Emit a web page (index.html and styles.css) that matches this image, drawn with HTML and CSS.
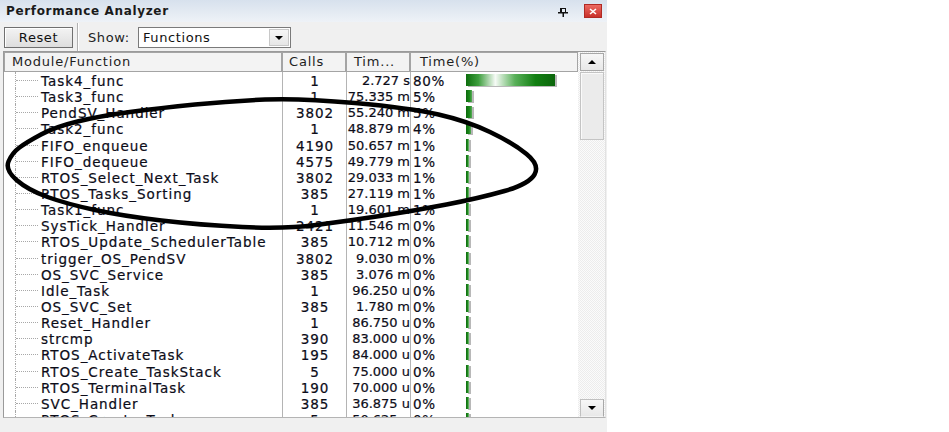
FILE: index.html
```html
<!DOCTYPE html>
<html>
<head>
<meta charset="utf-8">
<title>Performance Analyzer</title>
<link rel="stylesheet" href="styles.css">
</head>
<body>
<div class="panel">
  <div class="titlebar">
    <span class="title">Performance Analyzer</span>
    <svg class="pin" width="10" height="9" viewBox="0 0 10 9"><rect x="2.5" y="0.5" width="5" height="4" fill="none" stroke="#111"/><rect x="2" y="0" width="2" height="5" fill="#111"/><rect x="0" y="4" width="10" height="1.5" fill="#111"/><rect x="4.5" y="5" width="1.5" height="4" fill="#111"/></svg>
    <span class="close"><svg width="8" height="7" viewBox="0 0 8 7"><path d="M1 1 L7 6 M7 1 L1 6" stroke="#fff" stroke-width="1.6"/></svg></span>
  </div>
  <div class="toolbar">
    <button class="btn">Reset</button>
    <span class="sep"></span>
    <span class="lbl">Show:</span>
    <div class="select"><span class="sel-text">Functions</span><span class="ddbtn"><span class="tri-down"></span></span></div>
  </div>
  <div class="list">
    <div class="main">
      <div class="header">
        <div class="hcell">Module/Function</div>
        <div class="hcell hc2">Calls</div>
        <div class="hcell hc3">Tim...</div>
        <div class="hcell hc4">Time(%)</div>
      </div>
      <div class="rows">
        <div class="row"><div class="c-name">Task4_func</div><div class="c-calls">1</div><div class="c-time">2.727 s</div><div class="c-pct"><span class="pct">80%</span><span class="bar big"></span></div></div>
        <div class="row"><div class="c-name">Task3_func</div><div class="c-calls">1</div><div class="c-time">75.335 m</div><div class="c-pct"><span class="pct">5%</span><span class="bar b5"></span></div></div>
        <div class="row"><div class="c-name">PendSV_Handler</div><div class="c-calls">3802</div><div class="c-time">55.240 m</div><div class="c-pct"><span class="pct">5%</span><span class="bar b5"></span></div></div>
        <div class="row"><div class="c-name">Task2_func</div><div class="c-calls">1</div><div class="c-time">48.879 m</div><div class="c-pct"><span class="pct">4%</span><span class="bar b4"></span></div></div>
        <div class="row"><div class="c-name">FIFO_enqueue</div><div class="c-calls">4190</div><div class="c-time">50.657 m</div><div class="c-pct"><span class="pct">1%</span><span class="bar b1"></span></div></div>
        <div class="row"><div class="c-name">FIFO_dequeue</div><div class="c-calls">4575</div><div class="c-time">49.779 m</div><div class="c-pct"><span class="pct">1%</span><span class="bar b1"></span></div></div>
        <div class="row"><div class="c-name">RTOS_Select_Next_Task</div><div class="c-calls">3802</div><div class="c-time">29.033 m</div><div class="c-pct"><span class="pct">1%</span><span class="bar b1"></span></div></div>
        <div class="row"><div class="c-name">RTOS_Tasks_Sorting</div><div class="c-calls">385</div><div class="c-time">27.119 m</div><div class="c-pct"><span class="pct">1%</span><span class="bar b1"></span></div></div>
        <div class="row"><div class="c-name">Task1_func</div><div class="c-calls">1</div><div class="c-time">19.601 m</div><div class="c-pct"><span class="pct">1%</span><span class="bar b1"></span></div></div>
        <div class="row"><div class="c-name">SysTick_Handler</div><div class="c-calls">2421</div><div class="c-time">11.546 m</div><div class="c-pct"><span class="pct">0%</span><span class="bar b0"></span></div></div>
        <div class="row"><div class="c-name">RTOS_Update_SchedulerTable</div><div class="c-calls">385</div><div class="c-time">10.712 m</div><div class="c-pct"><span class="pct">0%</span><span class="bar b0"></span></div></div>
        <div class="row"><div class="c-name">trigger_OS_PendSV</div><div class="c-calls">3802</div><div class="c-time">9.030 m</div><div class="c-pct"><span class="pct">0%</span><span class="bar b0"></span></div></div>
        <div class="row"><div class="c-name">OS_SVC_Service</div><div class="c-calls">385</div><div class="c-time">3.076 m</div><div class="c-pct"><span class="pct">0%</span><span class="bar b0"></span></div></div>
        <div class="row"><div class="c-name">Idle_Task</div><div class="c-calls">1</div><div class="c-time">96.250 u</div><div class="c-pct"><span class="pct">0%</span><span class="bar b0"></span></div></div>
        <div class="row"><div class="c-name">OS_SVC_Set</div><div class="c-calls">385</div><div class="c-time">1.780 m</div><div class="c-pct"><span class="pct">0%</span><span class="bar b0"></span></div></div>
        <div class="row"><div class="c-name">Reset_Handler</div><div class="c-calls">1</div><div class="c-time">86.750 u</div><div class="c-pct"><span class="pct">0%</span><span class="bar b0"></span></div></div>
        <div class="row"><div class="c-name">strcmp</div><div class="c-calls">390</div><div class="c-time">83.000 u</div><div class="c-pct"><span class="pct">0%</span><span class="bar b0"></span></div></div>
        <div class="row"><div class="c-name">RTOS_ActivateTask</div><div class="c-calls">195</div><div class="c-time">84.000 u</div><div class="c-pct"><span class="pct">0%</span><span class="bar b0"></span></div></div>
        <div class="row"><div class="c-name">RTOS_Create_TaskStack</div><div class="c-calls">5</div><div class="c-time">75.000 u</div><div class="c-pct"><span class="pct">0%</span><span class="bar b0"></span></div></div>
        <div class="row"><div class="c-name">RTOS_TerminalTask</div><div class="c-calls">190</div><div class="c-time">70.000 u</div><div class="c-pct"><span class="pct">0%</span><span class="bar b0"></span></div></div>
        <div class="row"><div class="c-name">SVC_Handler</div><div class="c-calls">385</div><div class="c-time">36.875 u</div><div class="c-pct"><span class="pct">0%</span><span class="bar b0"></span></div></div>
        <div class="row"><div class="c-name">RTOS_Create_Task</div><div class="c-calls">5</div><div class="c-time">50.625 u</div><div class="c-pct"><span class="pct">0%</span><span class="bar b0"></span></div></div>
      </div>
    </div>
    <div class="vscroll">
      <div class="sbtn"><span class="tri-up"></span></div>
      <div class="thumb"></div>
      <div class="track"></div>
      <div class="sbtn sdown"><span class="tri-down"></span></div>
    </div>
  </div>
  <div class="bottom"></div>
</div>
<svg class="annotation" width="949" height="432" viewBox="0 0 949 432">
  <path d="M 355 103 Q 410 108 438.5 114.5 Q 467 121 490 132 Q 513 143 526.5 154 Q 540 165 534.5 174.5 Q 529 184 504.5 191 Q 480 198 446.5 204.5 Q 413 211 380 216 Q 347 221 316 225 Q 285 229 242.5 227 Q 200 225 161.5 220.5 Q 123 216 95 210 Q 67 204 47.5 197 Q 28 190 16.5 180 Q 5 170 8.5 161.5 Q 12 153 19.5 147.5 Q 27 142 41 134.5 Q 55 127 77.5 121.5 Q 100 116 130 112 Q 160 108 195 104.5 Q 230 101 265 99.5 Q 300 98 355 103 Z" fill="none" stroke="#000" stroke-width="4.5" stroke-linejoin="round"/>
</svg>
</body>
</html>
```
FILE: styles.css
```css
* { box-sizing: border-box; }
html, body { margin: 0; padding: 0; background: #fff; }
body {
  font-family: "DejaVu Sans", sans-serif;
  font-size: 13px;
  color: #161616;
  width: 949px;
  height: 432px;
  overflow: hidden;
  position: relative;
}
.panel {
  width: 607px;
  height: 432px;
  background: #f0f0f0;
  display: flex;
  flex-direction: column;
}
.titlebar {
  height: 22px;
  flex: none;
  background: linear-gradient(#d7e1ed, #eef2f7);
  display: flex;
  align-items: center;
  padding: 0 5px 0 6px;
}
.title {
  flex: 1;
  font-weight: bold;
  font-size: 12px;
  letter-spacing: 0.65px;
  color: #1a1a1a;
}
.pin { margin-right: 16px; margin-top: 2px; }
.close {
  width: 18px;
  height: 14px;
  background: linear-gradient(#ec6a62, #c8302a);
  border: 1px solid #b02a24;
  display: flex;
  align-items: center;
  justify-content: center;
}
.toolbar {
  height: 29px;
  flex: none;
  display: flex;
  align-items: flex-start;
  padding: 5px 0 0 4px;
  letter-spacing: 0.6px;
}
.btn {
  width: 69px;
  height: 21px;
  padding: 0;
  border: 1px solid #707070;
  background: linear-gradient(#f3f3f3, #dedede);
  box-shadow: inset 1px 1px #fff;
  font-family: "DejaVu Sans", sans-serif;
  font-size: 13px;
  letter-spacing: 0.6px;
  color: #111;
}
.sep {
  width: 2px;
  height: 28px;
  margin: -4px 0 0 4px;
  border-left: 1px solid #b0b0b0;
  border-right: 1px solid #fff;
}
.lbl {
  width: 50px;
  margin-left: 9px;
  line-height: 21px;
  color: #222;
}
.select {
  width: 153px;
  height: 21px;
  background: #fff;
  border: 1px solid #7a7a7a;
  display: flex;
  align-items: center;
  padding: 0 1px 0 4px;
}
.sel-text { flex: 1; color: #111; }
.ddbtn {
  width: 20px;
  height: 17px;
  background: linear-gradient(#f6f6f6, #e6e6e6);
  border: 1px solid #c8c8c8;
  display: flex;
  align-items: center;
  justify-content: center;
}
.tri-down {
  width: 0; height: 0;
  border-left: 4px solid transparent;
  border-right: 4px solid transparent;
  border-top: 4px solid #000;
}
.tri-up {
  width: 0; height: 0;
  border-left: 4px solid transparent;
  border-right: 4px solid transparent;
  border-bottom: 4px solid #000;
}
.list {
  height: 367px;
  flex: none;
  margin-left: 3px;
  width: 603px;
  border-left: 1px solid #9a9a9a;
  border-top: 1px solid #9a9a9a;
  border-bottom: 1px solid #b4b4b4;
  border-right: 1px solid #e2e2e2;
  display: flex;
  background: #fff;
}
.main {
  width: 574px;
  display: flex;
  flex-direction: column;
  overflow: hidden;
  font-size: 13.5px;
  letter-spacing: 0.95px;
  color: #0c0c18;
  -webkit-text-stroke: 0.2px #0c0c18;
}
.header {
  display: grid;
  grid-template-columns: 278px 64px 64px 168px;
  height: 20px;
  flex: none;
}
.hcell {
  border: 1px solid #a4a4a4;
  background: #f3f3f3;
  padding-left: 7px;
  line-height: 17px;
  color: #1e1e1e;
  white-space: nowrap;
  overflow: hidden;
  -webkit-text-stroke: 0;
  letter-spacing: 0.8px;
  font-size: 13px;
}
.hc2 { padding-left: 6px; }
.hc3 { padding-left: 7px; }
.hc4 { padding-left: 9px; }
.rows {
  flex: 1;
  overflow: hidden;
  background: #fff;
}
.row {
  display: grid;
  grid-template-columns: 278px 64px 64px 168px;
  height: 16.15px;
  line-height: 18px;
  white-space: nowrap;
}
.c-name {
  position: relative;
  padding-left: 37px;
  overflow: hidden;
}
.c-name::before {
  content: "";
  position: absolute;
  left: 11px;
  top: 0;
  bottom: 0;
  border-left: 1px dotted #a8a8a8;
}
.c-name::after {
  content: "";
  position: absolute;
  left: 12px;
  width: 22px;
  top: 8px;
  border-top: 1px dotted #a8a8a8;
}
.c-calls {
  border-left: 1px solid #b4b4b4;
  text-align: center;
  padding-left: 1px;
}
.c-time {
  border-left: 1px solid #b4b4b4;
  text-align: right;
  padding-right: 0;
  font-size: 13px;
  letter-spacing: 0;
}
.c-pct {
  border-left: 1px solid #b4b4b4;
  display: flex;
  align-items: flex-start;
  padding-left: 2px;
  letter-spacing: 0.6px;
}
.pct { width: 53px; flex: none; }
.bar {
  margin-top: 2px;
  height: 12px;
  background: linear-gradient(90deg, #0d6e0d 0%, #3e9e3e 14%, #f6fbf6 33%, #59b059 55%, #127f12 78%, #0b650b 100%);
  box-shadow: 2px 1px 0 #b8b8b8;
}
.big { width: 89px; }
.b5 { width: 6px; background: linear-gradient(90deg, #0c6a0c, #1d8a1d 60%, #5aac5a); }
.b4 { width: 5px; background: linear-gradient(90deg, #0c6a0c, #1d8a1d 60%, #5aac5a); }
.b1, .b0 { width: 3px; background: linear-gradient(90deg, #0c6a0c, #228c22 60%, #8acb8a); }
.vscroll {
  width: 27px;
  display: flex;
  flex-direction: column;
  padding: 1px 1px 0 2px;
  background-color: #f4f4f4;
  background-image: repeating-conic-gradient(#fbfbfb 0 25%, #ececec 0 50%);
  background-size: 2px 2px;
}
.sbtn {
  height: 18px;
  flex: none;
  border: 1px solid #a8a8a8;
  background: linear-gradient(#f7f7f7, #e8e8e8);
  display: flex;
  align-items: center;
  justify-content: center;
}
.thumb {
  height: 68px;
  flex: none;
  margin-top: 1px;
  border: 1px solid #c4c4c4;
  background: #ebebeb;
  box-shadow: inset 1px 1px #fafafa;
}
.track { flex: 1; }
.sdown { border-color: #c0c0c0 #a8a8a8 #f4f4f4 #c0c0c0; }
.bottom { flex: 1; background: #f0f0f0; }
.annotation {
  position: absolute;
  left: 0;
  top: 0;
  pointer-events: none;
}
```
